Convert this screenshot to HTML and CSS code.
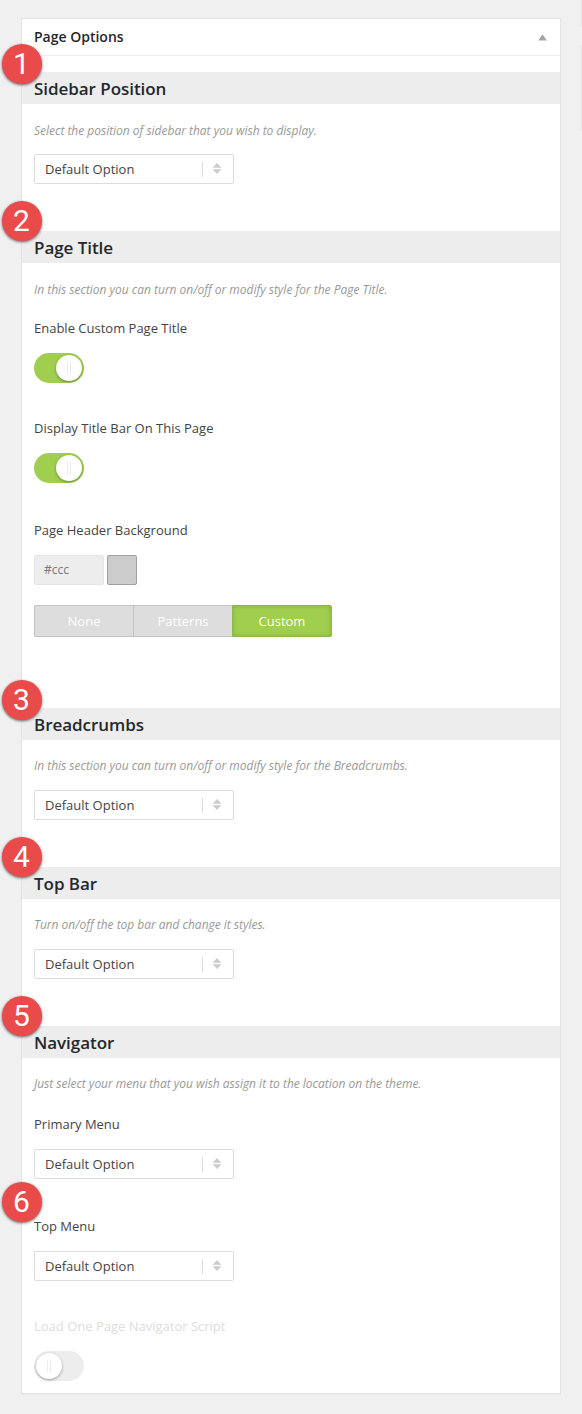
FILE: index.html
```html
<!DOCTYPE html>
<html lang="en">
<head>
<meta charset="utf-8">
<title>Page Options</title>
<link rel="stylesheet" href="styles.css">
</head>
<body>
<svg class="defs" width="0" height="0"><defs>
<symbol id="sort" viewBox="0 0 10 11"><path d="M5 0 9.4 4.7H.6zM5 11 9.4 6.3H.6z" fill="#ccc"/></symbol>
</defs></svg>
<div class="edge edge-a"></div>
<div class="edge edge-b"></div>
<main class="panel">
  <header class="panel-head"><h1>Page Options</h1><svg width="9" height="7" viewBox="0 0 9 7"><path d="M4.5.3 8.8 6.5H.2z" fill="#a0a5aa"/></svg></header>

  <section class="section">
    <span class="badge badge-first">1</span>
    <h2>Sidebar Position</h2>
    <p class="desc">Select the position of sidebar that you wish to display.</p>
    <div class="select after-desc"><span>Default Option</span><i></i><svg width="10" height="11"><use href="#sort"/></svg></div>
  </section>

  <section class="section section-title">
    <span class="badge">2</span>
    <h2>Page Title</h2>
    <p class="desc">In this section you can turn on/off or modify style for the Page Title.</p>
    <div class="field first"><label>Enable Custom Page Title</label><div class="switch on"><b></b></div></div>
    <div class="field"><label>Display Title Bar On This Page</label><div class="switch on"><b></b></div></div>
    <div class="field wide">
      <label>Page Header Background</label>
      <div class="color"><span class="hex">#ccc</span><span class="swatch"></span></div>
      <div class="tabs"><span>None</span><span>Patterns</span><span class="active">Custom</span></div>
    </div>
  </section>

  <section class="section raised">
    <span class="badge badge-first">3</span>
    <h2>Breadcrumbs</h2>
    <p class="desc">In this section you can turn on/off or modify style for the Breadcrumbs.</p>
    <div class="select after-desc"><span>Default Option</span><i></i><svg width="10" height="11"><use href="#sort"/></svg></div>
  </section>

  <section class="section raised">
    <span class="badge">4</span>
    <h2>Top Bar</h2>
    <p class="desc">Turn on/off the top bar and change it styles.</p>
    <div class="select after-desc"><span>Default Option</span><i></i><svg width="10" height="11"><use href="#sort"/></svg></div>
  </section>

  <section class="section section-nav raised">
    <span class="badge">5</span>
    <h2>Navigator</h2>
    <p class="desc">Just select your menu that you wish assign it to the location on the theme.</p>
    <div class="field first"><label>Primary Menu</label><div class="select"><span>Default Option</span><i></i><svg width="10" height="11"><use href="#sort"/></svg></div></div>
    <div class="field wide"><span class="badge badge-field">6</span><label>Top Menu</label><div class="select"><span>Default Option</span><i></i><svg width="10" height="11"><use href="#sort"/></svg></div></div>
    <div class="field disabled"><label>Load One Page Navigator Script</label><div class="switch"><b></b></div></div>
  </section>
</main>
</body>
</html>
```
FILE: styles.css
```css
* { box-sizing: border-box; }
body {
  margin: 0;
  height: 1414px;
  padding: 18px 21px 0;
  background: #f0f0f0;
  font: 13px/20px "Open Sans", sans-serif;
  color: #444;
  position: relative;
  overflow: hidden;
}
.defs { position: absolute; }
/* Neighbouring boxes cut off at the window's right edge */
.edge { position: absolute; right: 0; width: 1px; background: #e6e6e6; }
.edge-a { top: 0; height: 27px; }
.edge-b { top: 45px; height: 86px; }

.panel {
  width: 540px;
  height: 1376px;
  background: #fff;
  border: 1px solid #e5e5e5;
  box-shadow: 0 1px 1px rgba(0, 0, 0, .04);
}
.panel-head {
  display: flex;
  align-items: center;
  justify-content: space-between;
  height: 37px;
  margin-bottom: 16px;
  padding: 0 13px 0 12px;
  border-bottom: 1px solid #eee;
}
h1 { margin: 0; font-size: 14px; font-weight: 600; color: #23282d; }

.section { position: relative; height: 159px; }
.section-title { height: 477px; }
.section-nav { height: 366px; }
h2 {
  margin: 0;
  height: 32px;
  padding: 0 12px;
  background: #ededed;
  color: #23282d;
  font-size: 17px;
  font-weight: 600;
  letter-spacing: -.05px;
  line-height: 34px;
}
.desc {
  margin: 17px 12px 0;
  color: #999;
  font-size: 12px;
  font-style: italic;
  letter-spacing: -.015px;
  white-space: nowrap;
}
.raised .desc { margin-top: 16px; }

.field { position: relative; margin: 35px 12px 0; }
.field.first { margin-top: 18px; }
.section-nav .field.first { margin-top: 20px; }
.field.wide { margin-top: 37px; }
label { display: block; margin-bottom: 15px; }
.disabled label { color: #ddd; }

.select {
  display: flex;
  align-items: center;
  width: 200px;
  height: 30px;
  padding-left: 10px;
  border: 1px solid #ddd;
  border-radius: 2px;
}
.select.after-desc { margin: 13px 12px 0; }
.raised .select.after-desc { margin-top: 14px; }
.select span { width: 157px; }
.select i { width: 1px; height: 15px; margin-right: 9px; background: #ddd; }
.select svg { margin-bottom: 1px; }

.switch {
  display: flex;
  width: 50px;
  height: 30px;
  padding: 2px;
  border-radius: 15px;
  background: #ededed;
}
.switch.on { justify-content: flex-end; background: #a0ce4e; }
.switch b {
  display: flex;
  align-items: center;
  justify-content: center;
  width: 26px;
  height: 26px;
  border-radius: 50%;
  background: #fff;
  box-shadow: 0 1px 3px rgba(0, 0, 0, .35);
}
.switch b::before {
  content: "";
  box-sizing: border-box;
  width: 4px;
  height: 12px;
  border: solid #ececec;
  border-width: 0 1px;
}

.color { display: flex; gap: 3px; }
.hex {
  width: 70px;
  height: 30px;
  padding-left: 9px;
  border: 1px solid #e5e5e5;
  border-radius: 2px;
  background: #ededed;
  color: #777;
  font-size: 12px;
  line-height: 28px;
}
.swatch { width: 30px; height: 30px; border: 1px solid #a0a0a0; border-radius: 2px; background: #ccc; }

.tabs { display: flex; width: 298px; height: 32px; margin-top: 20px; }
.tabs span {
  width: 99px;
  border: 1px solid #c2c4c4;
  border-right: 0;
  background: #ddd;
  color: #fff;
  line-height: 30px;
  text-align: center;
}
.tabs span:first-child { border-radius: 2px 0 0 2px; }
.tabs .active {
  width: 100px;
  border: 1px solid #8fb94a;
  border-radius: 0 2px 2px 0;
  background: #a0ce4e;
  box-shadow: inset 0 0 4px rgba(0, 0, 0, .18);
}

.badge {
  position: absolute;
  z-index: 1;
  left: -20px;
  top: -30px;
  width: 40px;
  height: 40px;
  padding-right: 1px;
  border-radius: 50%;
  background: #e94b4b;
  box-shadow: 0 1px 3px rgba(0, 0, 0, .6);
  color: #fff;
  font: 30px/39px Roboto, sans-serif;
  text-align: center;
}
.badge-first { top: -28px; }
.badge-field { left: -32px; top: -34px; }
```
